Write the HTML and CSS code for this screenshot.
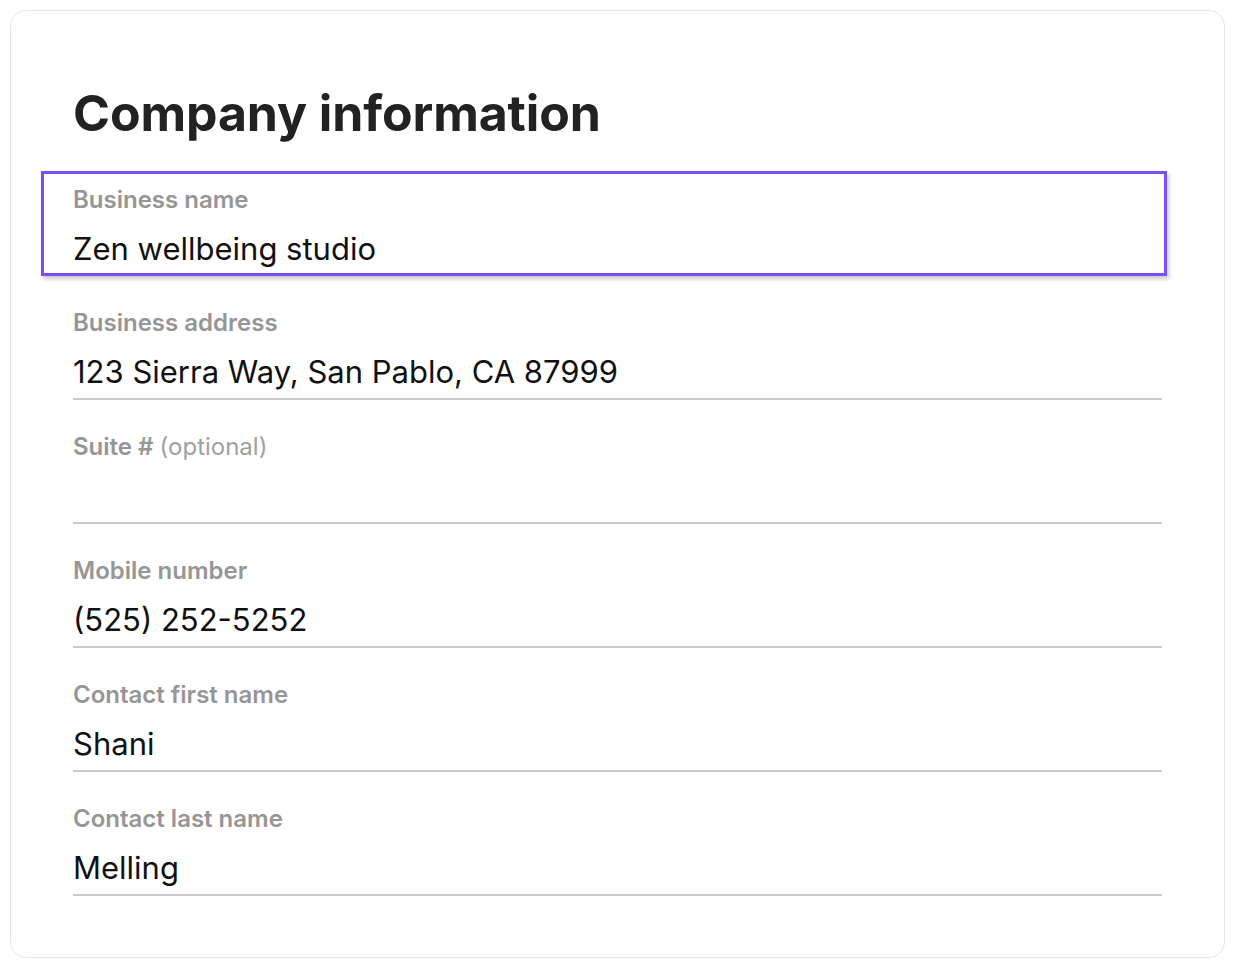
FILE: index.html
```html
<!DOCTYPE html>
<html lang="en">
<head>
<meta charset="utf-8">
<title>Company information</title>
<link rel="stylesheet" href="styles.css">
</head>
<body>
<section class="card">
  <h1 class="title">Company information</h1>
  <div class="field field-focused">
    <div class="label">Business name</div>
    <div class="value">Zen wellbeing studio</div>
  </div>
  <div class="field">
    <div class="label">Business address</div>
    <div class="value">123 Sierra Way, San Pablo, CA 87999</div>
  </div>
  <div class="field">
    <div class="label">Suite # <span class="optional">(optional)</span></div>
    <div class="value"></div>
  </div>
  <div class="field">
    <div class="label">Mobile number</div>
    <div class="value">(525) 252-5252</div>
  </div>
  <div class="field">
    <div class="label">Contact first name</div>
    <div class="value">Shani</div>
  </div>
  <div class="field">
    <div class="label">Contact last name</div>
    <div class="value">Melling</div>
  </div>
</section>
</body>
</html>
```
FILE: styles.css
```css
* { box-sizing: border-box; }
html, body { margin: 0; padding: 0; background: #ffffff; }
body {
  font-family: Inter, "Noto Sans", sans-serif;
  color: #111111;
  padding: 10px 11px 9px 10px;
}
.card {
  width: 1215px;
  height: 948px;
  border: 1.5px solid #e7e7e7;
  border-radius: 16px;
  padding: 72px 62px 0 62px;
  background: #ffffff;
}
.title {
  margin: 0;
  font-size: 50px;
  line-height: 60px;
  font-weight: 700;
  color: #222222;
  letter-spacing: -0.1px;
}
.field {
  padding-top: 33px;
  padding-bottom: 6px;
  border-bottom: 2px solid #cacaca;
}
.label {
  font-size: 24px;
  line-height: 28px;
  font-weight: 600;
  color: #969696;
  white-space: nowrap;
}
.optional {
  font-weight: 400;
  color: #a0a0a0;
}
.value {
  margin-top: 15px;
  height: 40px;
  font-size: 31px;
  line-height: 40px;
  font-weight: 400;
  color: #111111;
  white-space: nowrap;
}
.field-focused {
  margin: 27.5px -5px 0 -32px;
  padding: 12px 0 4px 29px;
  border: 3px solid #7950f5;
  box-shadow: 2px 3px 4px rgba(0, 0, 0, 0.22);
}
```
